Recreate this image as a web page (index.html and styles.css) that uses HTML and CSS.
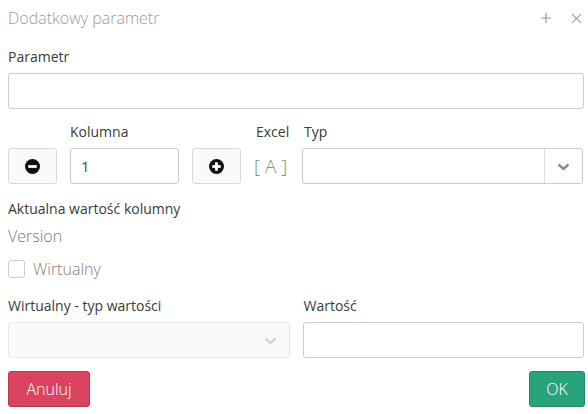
FILE: index.html
```html
<!DOCTYPE html>
<html lang="pl">
<head>
    <meta charset="UTF-8">
    <meta name="viewport" content="width=device-width, initial-scale=1.0">
    <title>Dodatkowy parametr</title>
    <link rel="stylesheet" href="styles.css">
</head>
<body>
    <div class="dialog">
        <header class="dialog-header">
            <h1 class="dialog-title">Dodatkowy parametr</h1>
            <div class="header-tools">
                <svg class="tool" width="12" height="12" viewBox="0 0 12 12"><path d="M6 1v10M1 6h10" stroke="#999" stroke-width="1.2" fill="none"/></svg>
                <svg class="tool" width="11" height="11" viewBox="0 0 11 11"><path d="M1 1l9 9M10 1l-9 9" stroke="#aaa" stroke-width="1.2" fill="none"/></svg>
            </div>
        </header>

        <label class="field-label param-label" for="param">Parametr</label>
        <input type="text" id="param" class="text-input">

        <div class="column-row">
            <span class="field-label col-kolumna">Kolumna</span>
            <span class="field-label col-excel">Excel</span>
            <span class="field-label col-typ">Typ</span>

            <button class="step-btn col-minus">
                <svg width="15" height="15" viewBox="0 0 16 16"><circle cx="8" cy="8" r="8" fill="#111"/><rect x="3.5" y="6.5" width="9" height="3" fill="#fff"/></svg>
            </button>
            <input type="text" class="text-input col-input" value="1">
            <button class="step-btn col-plus">
                <svg width="15" height="15" viewBox="0 0 16 16"><circle cx="8" cy="8" r="8" fill="#111"/><rect x="3.5" y="6.5" width="9" height="3" fill="#fff"/><rect x="6.5" y="3.5" width="3" height="9" fill="#fff"/></svg>
            </button>
            <span class="excel-letter">[ A ]</span>
            <div class="select-box col-select">
                <span class="select-value"></span>
                <span class="select-arrow">
                    <svg width="13" height="8" viewBox="0 0 13 8"><path d="M1.5 1.5l5 4.5 5-4.5" stroke="#888" stroke-width="2.4" fill="none"/></svg>
                </span>
            </div>
        </div>

        <div class="field-label current-label">Aktualna wartość kolumny</div>
        <div class="current-value">Version</div>

        <label class="check-row">
            <span class="checkbox"></span>
            <span>Wirtualny</span>
        </label>

        <div class="virtual-row">
            <span class="field-label">Wirtualny - typ wartości</span>
            <span class="field-label">Wartość</span>
            <div class="select-box disabled">
                <span class="select-value"></span>
                <span class="select-arrow no-line">
                    <svg width="13" height="8" viewBox="0 0 13 8"><path d="M1.5 1.5l5 4.5 5-4.5" stroke="#d4d4d4" stroke-width="2.4" fill="none"/></svg>
                </span>
            </div>
            <input type="text" class="text-input">
        </div>

        <div class="dialog-footer">
            <button class="btn btn-cancel">Anuluj</button>
            <button class="btn btn-ok">OK</button>
        </div>
    </div>
</body>
</html>
```

FILE: styles.css
```css
/* Base */
body {
  margin: 0;
  background-color: #ffffff;
  font-family: "Open Sans", Arial, sans-serif;
  color: #333333;
}

.dialog {
  width: 588px;
  box-sizing: border-box;
  padding: 0 4px 0 8px;
}

/* Header */
.dialog-header {
  height: 36px;
  display: flex;
  align-items: center;
  justify-content: space-between;
}

.dialog-title {
  margin: 0;
  font-size: 16px;
  font-weight: 300;
  color: #9a9a9a;
  line-height: 20px;
}

.header-tools {
  display: flex;
  align-items: center;
  gap: 19px;
  padding-right: 2px;
}

.tool {
  display: block;
}

/* Labels and inputs */
.field-label {
  display: block;
  font-size: 14px;
  line-height: 20px;
  color: #3a3a3a;
}

.param-label {
  margin-top: 11px;
  margin-bottom: 6px;
}

.text-input {
  display: block;
  width: 100%;
  height: 36px;
  box-sizing: border-box;
  border: 1px solid #cccccc;
  border-radius: 3px;
  padding: 0 10px;
  font-family: inherit;
  font-size: 15px;
  color: #444444;
  background-color: #ffffff;
}

/* Kolumna row */
.column-row {
  display: grid;
  grid-template-columns: 49px 109px 49px 35px 1fr;
  column-gap: 13px;
  row-gap: 6px;
  margin-top: 13px;
}

.col-kolumna { grid-column: 2; grid-row: 1; }
.col-excel { grid-column: 4; grid-row: 1; padding-left: 2px; }
.col-typ { grid-column: 5; grid-row: 1; padding-left: 2px; }
.col-minus { grid-column: 1; grid-row: 2; }
.col-input { grid-column: 2; grid-row: 2; }
.col-plus { grid-column: 3; grid-row: 2; }
.excel-letter { grid-column: 4; grid-row: 2; }
.col-select { grid-column: 5; grid-row: 2; margin-right: 1px; }

.step-btn {
  height: 36px;
  border: 1px solid #d8d8d8;
  border-radius: 3px;
  background-color: #fafafa;
  display: flex;
  align-items: center;
  justify-content: center;
  padding: 0;
}

.excel-letter {
  font-size: 19px;
  font-weight: 300;
  color: #8a8a8a;
  line-height: 36px;
  white-space: nowrap;
}

.select-box {
  height: 36px;
  box-sizing: border-box;
  border: 1px solid #cccccc;
  border-radius: 3px;
  display: flex;
  background-color: #ffffff;
}

.select-value {
  flex: 1;
}

.select-arrow {
  width: 37px;
  border-left: 1px solid #dddddd;
  display: flex;
  align-items: center;
  justify-content: center;
  padding-top: 2px;
}

.select-box.disabled {
  background-color: #fafafa;
  border-color: #e6e6e6;
}

.select-arrow.no-line {
  border-left: none;
}

/* Current value */
.current-label {
  margin-top: 15px;
}

.current-value {
  margin-top: 6px;
  font-size: 16px;
  font-weight: 300;
  line-height: 22px;
  color: #777777;
}

.check-row {
  display: flex;
  align-items: center;
  gap: 8px;
  margin-top: 11px;
  font-size: 16px;
  font-weight: 300;
  line-height: 22px;
  color: #808080;
}

.checkbox {
  width: 15px;
  height: 16px;
  border: 1px solid #cccccc;
  border-radius: 3px;
  background-color: #ffffff;
}

/* Virtual row */
.virtual-row {
  display: grid;
  grid-template-columns: 1fr 1fr;
  column-gap: 13px;
  row-gap: 6px;
  margin-top: 16px;
}

.virtual-row .field-label:nth-child(2) {
  padding-left: 1px;
}

/* Footer */
.dialog-footer {
  display: flex;
  justify-content: space-between;
  margin-top: 13px;
  margin-right: -1px;
}

.btn {
  height: 36px;
  padding: 0 16px;
  border-radius: 3px;
  font-family: inherit;
  font-size: 16px;
  font-weight: 300;
  color: #ffffff;
}

.btn-cancel {
  background-color: #d9445f;
  border: 1px solid #c23350;
  width: 82px;
}

.btn-ok {
  background-color: #27a47c;
  border: 1px solid #1c8a66;
  width: 56px;
}
```
